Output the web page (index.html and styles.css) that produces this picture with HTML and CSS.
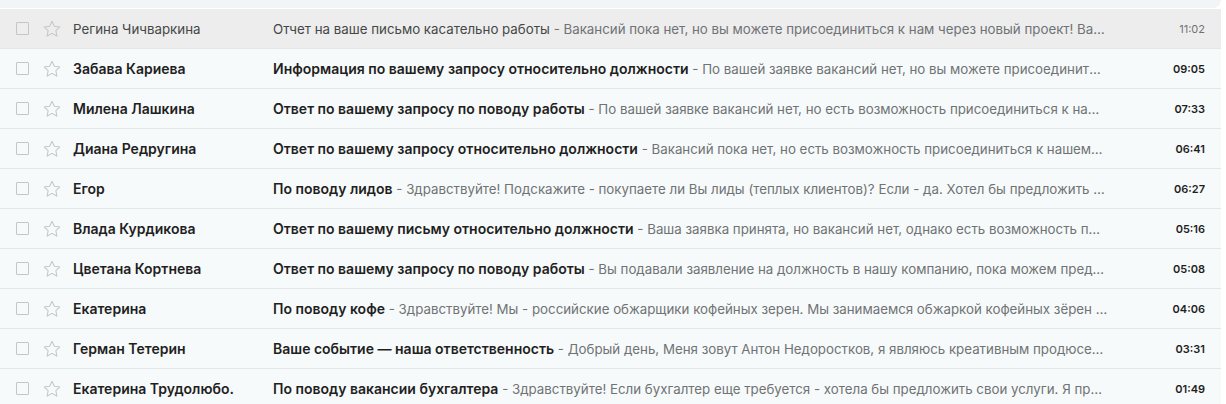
FILE: index.html
```html
<!DOCTYPE html>
<html lang="ru">
<head>
  <meta charset="UTF-8">
  <meta name="viewport" content="width=device-width, initial-scale=1.0">
  <title>Входящие</title>
  <link rel="stylesheet" href="styles.css">
</head>
<body>
  <div class="mail">
    <div class="mail-top"></div>
    <ul class="mail-list">
      <li class="mail-row">
        <span class="mail-check"></span>
        <svg class="mail-star" viewBox="0 0 24 24"><path d="M12 3.5l2.6 5.5 6 .7-4.4 4.1 1.2 5.9L12 16.8l-5.4 2.9 1.2-5.9-4.4-4.1 6-.7z"/></svg>
        <span class="mail-from">Регина Чичваркина</span>
        <span class="mail-text"><span class="mail-subject">Отчет на ваше письмо касательно работы</span> - Вакансий пока нет, но вы можете присоединиться к нам через новый проект! Вакансии появятся позже, следите за новостями</span>
        <span class="mail-time">11:02</span>
      </li>
      <li class="mail-row unread">
        <span class="mail-check"></span>
        <svg class="mail-star" viewBox="0 0 24 24"><path d="M12 3.5l2.6 5.5 6 .7-4.4 4.1 1.2 5.9L12 16.8l-5.4 2.9 1.2-5.9-4.4-4.1 6-.7z"/></svg>
        <span class="mail-from">Забава Кариева</span>
        <span class="mail-text"><span class="mail-subject">Информация по вашему запросу относительно должности</span> - По вашей заявке вакансий нет, но вы можете присоединиться к нашему резерву кандидатов</span>
        <span class="mail-time">09:05</span>
      </li>
      <li class="mail-row unread">
        <span class="mail-check"></span>
        <svg class="mail-star" viewBox="0 0 24 24"><path d="M12 3.5l2.6 5.5 6 .7-4.4 4.1 1.2 5.9L12 16.8l-5.4 2.9 1.2-5.9-4.4-4.1 6-.7z"/></svg>
        <span class="mail-from">Милена Лашкина</span>
        <span class="mail-text"><span class="mail-subject">Ответ по вашему запросу по поводу работы</span> - По вашей заявке вакансий нет, но есть возможность присоединиться к нашей команде позже</span>
        <span class="mail-time">07:33</span>
      </li>
      <li class="mail-row unread">
        <span class="mail-check"></span>
        <svg class="mail-star" viewBox="0 0 24 24"><path d="M12 3.5l2.6 5.5 6 .7-4.4 4.1 1.2 5.9L12 16.8l-5.4 2.9 1.2-5.9-4.4-4.1 6-.7z"/></svg>
        <span class="mail-from">Диана Редругина</span>
        <span class="mail-text"><span class="mail-subject">Ответ по вашему запросу относительно должности</span> - Вакансий пока нет, но есть возможность присоединиться к нашему проекту</span>
        <span class="mail-time">06:41</span>
      </li>
      <li class="mail-row unread">
        <span class="mail-check"></span>
        <svg class="mail-star" viewBox="0 0 24 24"><path d="M12 3.5l2.6 5.5 6 .7-4.4 4.1 1.2 5.9L12 16.8l-5.4 2.9 1.2-5.9-4.4-4.1 6-.7z"/></svg>
        <span class="mail-from">Егор</span>
        <span class="mail-text"><span class="mail-subject">По поводу лидов</span> - Здравствуйте! Подскажите - покупаете ли Вы лиды (теплых клиентов)? Если - да. Хотел бы предложить сотрудничество</span>
        <span class="mail-time">06:27</span>
      </li>
      <li class="mail-row unread">
        <span class="mail-check"></span>
        <svg class="mail-star" viewBox="0 0 24 24"><path d="M12 3.5l2.6 5.5 6 .7-4.4 4.1 1.2 5.9L12 16.8l-5.4 2.9 1.2-5.9-4.4-4.1 6-.7z"/></svg>
        <span class="mail-from">Влада Курдикова</span>
        <span class="mail-text"><span class="mail-subject">Ответ по вашему письму относительно должности</span> - Ваша заявка принята, но вакансий нет, однако есть возможность присоединиться позже</span>
        <span class="mail-time">05:16</span>
      </li>
      <li class="mail-row unread">
        <span class="mail-check"></span>
        <svg class="mail-star" viewBox="0 0 24 24"><path d="M12 3.5l2.6 5.5 6 .7-4.4 4.1 1.2 5.9L12 16.8l-5.4 2.9 1.2-5.9-4.4-4.1 6-.7z"/></svg>
        <span class="mail-from">Цветана Кортнева</span>
        <span class="mail-text"><span class="mail-subject">Ответ по вашему запросу по поводу работы</span> - Вы подавали заявление на должность в нашу компанию, пока можем предложить только стажировку</span>
        <span class="mail-time">05:08</span>
      </li>
      <li class="mail-row unread">
        <span class="mail-check"></span>
        <svg class="mail-star" viewBox="0 0 24 24"><path d="M12 3.5l2.6 5.5 6 .7-4.4 4.1 1.2 5.9L12 16.8l-5.4 2.9 1.2-5.9-4.4-4.1 6-.7z"/></svg>
        <span class="mail-from">Екатерина</span>
        <span class="mail-text"><span class="mail-subject">По поводу кофе</span> - Здравствуйте! Мы - российские обжарщики кофейных зерен. Мы занимаемся обжаркой кофейных зёрен с 2015 года</span>
        <span class="mail-time">04:06</span>
      </li>
      <li class="mail-row unread">
        <span class="mail-check"></span>
        <svg class="mail-star" viewBox="0 0 24 24"><path d="M12 3.5l2.6 5.5 6 .7-4.4 4.1 1.2 5.9L12 16.8l-5.4 2.9 1.2-5.9-4.4-4.1 6-.7z"/></svg>
        <span class="mail-from">Герман Тетерин</span>
        <span class="mail-text"><span class="mail-subject">Ваше событие — наша ответственность</span> - Добрый день, Меня зовут Антон Недоростков, я являюсь креативным продюсером агентства</span>
        <span class="mail-time">03:31</span>
      </li>
      <li class="mail-row unread">
        <span class="mail-check"></span>
        <svg class="mail-star" viewBox="0 0 24 24"><path d="M12 3.5l2.6 5.5 6 .7-4.4 4.1 1.2 5.9L12 16.8l-5.4 2.9 1.2-5.9-4.4-4.1 6-.7z"/></svg>
        <span class="mail-from">Екатерина Трудолюбо.</span>
        <span class="mail-text"><span class="mail-subject">По поводу вакансии бухгалтера</span> - Здравствуйте! Если бухгалтер еще требуется - хотела бы предложить свои услуги. Я профессиональный бухгалтер</span>
        <span class="mail-time">01:49</span>
      </li>
    </ul>
  </div>
</body>
</html>
```

FILE: styles.css
```css
html, body {
  margin: 0;
  padding: 0;
  background: #fff;
}

ul, li {
  list-style: none;
  margin: 0;
  padding: 0;
}

.mail {
  width: 1221px;
  font-family: Inter, "Noto Sans", sans-serif;
  font-size: 13.3px;
  color: #5f6368;
}

.mail-top {
  height: 8px;
  background: #f2f5f5;
  border-bottom-right-radius: 8px;
  margin-bottom: 1px;
}

.mail-row {
  display: flex;
  align-items: center;
  height: 39px;
  padding: 0 16px;
  background: #f7fafa;
  border-bottom: 1px solid #e2e8e8;
}

.mail-row:first-child {
  background: #ededed;
}

.mail-check {
  flex: none;
  width: 11px;
  height: 11px;
  border: 1.5px solid #c6c6c6;
  border-radius: 1px;
}

.mail-star {
  flex: none;
  width: 22px;
  height: 22px;
  margin-left: 12px;
  fill: none;
  stroke: #c6c6c6;
  stroke-width: 1.1;
  stroke-linejoin: round;
}

.mail-from {
  flex: none;
  width: 200px;
  margin-left: 10px;
  color: #444746;
  white-space: nowrap;
  overflow: hidden;
}

.mail-text {
  flex: 1;
  min-width: 0;
  margin-right: 52px;
  white-space: nowrap;
  overflow: hidden;
  text-overflow: ellipsis;
  color: #6f7375;
}

.mail-subject {
  color: #444746;
}

.mail-time {
  flex: none;
  width: 45px;
  text-align: right;
  font-size: 11px;
  color: #6f7375;
}

.unread .mail-from,
.unread .mail-subject {
  font-size: 14px;
  font-weight: 600;
  color: #1f1f1f;
}

.unread .mail-time {
  font-weight: 600;
  color: #1f1f1f;
}
```
